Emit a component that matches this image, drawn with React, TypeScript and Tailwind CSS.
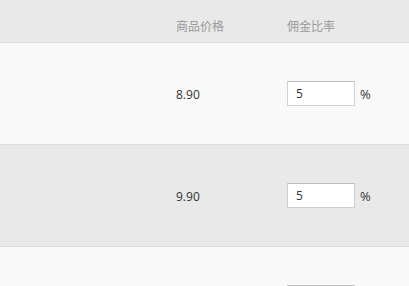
import React from "react";

const rows = [
  { price: "8.90", rate: "5", bg: "bg-[#f9f9f9]", full: true },
  { price: "9.90", rate: "5", bg: "bg-[#e9e9e9]", full: true },
  { price: "", rate: "", bg: "bg-[#f9f9f9]", full: false },
];

export default function App() {
  return (
    <div
      className="w-[409px] h-[286px] overflow-hidden bg-[#f9f9f9] text-[12px] text-[#333]"
      style={{ fontFamily: '"Open Sans", "Noto Sans CJK SC", sans-serif' }}
    >
      <div className="grid grid-cols-[176px_111px_1fr] h-[43px] bg-[#e9e9e9] border-b border-[#dcdcdc] text-[#999] pt-[18px] leading-[18px]">
        <div />
        <div>商品价格</div>
        <div>佣金比率</div>
      </div>
      {rows.map((r, i) => (
        <div
          key={i}
          className={`grid grid-cols-[176px_111px_1fr] items-center h-[102px] border-b border-[#dcdcdc] ${r.bg}`}
        >
          <div />
          <div className="pt-[2px]">{r.price}</div>
          <div className="flex items-center gap-[5px]">
            <input
              readOnly
              value={r.rate}
              className="w-[68px] h-[25px] bg-white border border-[#d0d0d0] border-t-[#bdbdbd] px-[8px] text-[12px] text-[#333] outline-none"
            />
            {r.full && <span className="pt-[2px] text-[13px]">%</span>}
          </div>
        </div>
      ))}
    </div>
  );
}
